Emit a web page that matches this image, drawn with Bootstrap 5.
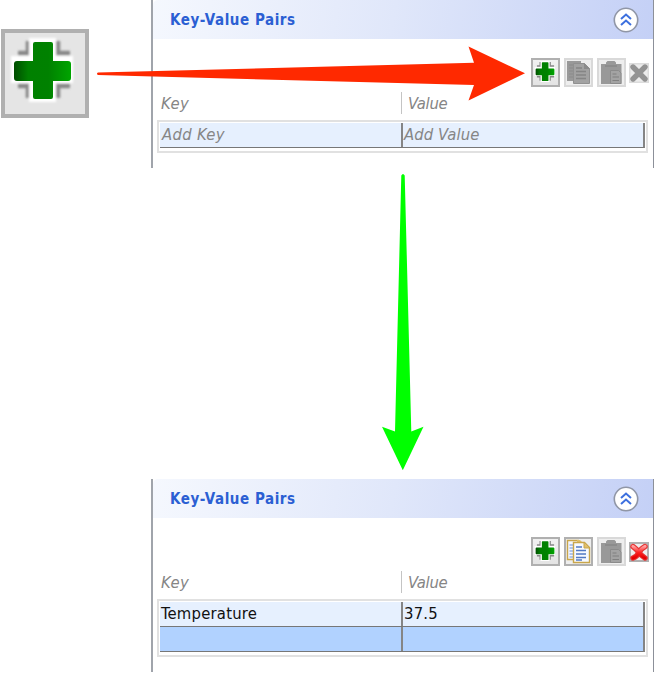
<!DOCTYPE html>
<html lang="en">
<head>
<meta charset="utf-8">
<meta name="viewport" content="width=device-width, initial-scale=1">
<title>Key-Value Pairs</title>
<link href="https://cdn.jsdelivr.net/npm/bootstrap@5.3.0/dist/css/bootstrap.min.css" rel="stylesheet">
<style>
body{font-family:"DejaVu Sans Condensed","DejaVu Sans",sans-serif;font-stretch:condensed;font-size:16.5px;line-height:20px;color:#111;background:#fff}
.stage{width:654px;height:674px}
.big-add{width:89px;height:89px;margin-top:29px}
.kv-panel{width:503px;border-left:2px solid #a0a4ab;border-right:1px solid #8c9099}
.kv-top{height:168px}
.kv-bottom{height:193px}
.gap-row{height:311px}
.kv-head{height:39px;padding:0 14px 0 17px;background:linear-gradient(100deg,#f5f8fe 0%,#e0e7fa 48%,#c4d0f6 100%);border-radius:5px 0 0 0}
.kv-title{font-size:15px;letter-spacing:.55px;font-weight:700;color:#2b5fd3}
.tools{height:29px;margin-top:19px;padding-right:4px;gap:4px}
.tools svg{display:block}
.tools .del{margin-left:-1px}
.labels{height:22px;margin:5px 5px 0 8px;line-height:23px;font-style:italic;color:#858585;letter-spacing:-.3px}
.labels .k{width:240px;letter-spacing:.3px}
.labels .v{border-left:1px solid #c4c4c4;padding-left:6px;height:22px}
.grid-box{margin:6px 5px 0 4px;border:2px solid #e1e1e1;padding:1px 1px 3px}
.cells{height:25px;background:#e6f0fe;border-bottom:1px solid #777;border-right:2px solid #858585;line-height:23px;letter-spacing:.22px}
.cells .k{width:241px;padding-left:1px}
.cells .v{border-left:2px solid #858585;padding-left:1px}
.hint{font-style:italic;color:#858585;letter-spacing:.1px}
.hint .k{padding-left:2px;letter-spacing:.3px}
.cells.picked{background:#b1d2ff}
</style>
<script src="https://cdn.jsdelivr.net/npm/bootstrap@5.3.0/dist/js/bootstrap.bundle.min.js"></script>
</head>
<body>
<svg width="0" height="0" class="position-absolute" aria-hidden="true">
  <defs>
    <linearGradient id="face" x2="0" y2="1"><stop stop-color="#f2f2f2"/><stop offset="1" stop-color="#e3e3e3"/></linearGradient>
    <linearGradient id="leaf"><stop stop-color="#004d00"/><stop offset=".25" stop-color="#008000"/><stop offset=".6" stop-color="#008100"/><stop offset="1" stop-color="#00a500"/></linearGradient>
    <linearGradient id="ruby" x2="0" y2="1"><stop stop-color="#ff9d9d"/><stop offset=".5" stop-color="#f22"/><stop offset="1" stop-color="#e30000"/></linearGradient>
    <filter id="soft"><feGaussianBlur stdDeviation="1.1"/></filter>
    <symbol id="plus" viewBox="0 0 88 88">
      <g filter="url(#soft)">
      <path d="M18 25h10v-12M18 58h10v12M58 13v12h12M58 70V58h12" transform="translate(0 -1)" fill="none" stroke="#888" stroke-width="4.500"/>
      <path d="M29 9h27v18h17v27H56v19H29V54H11V27h18z" fill="#fff"/>
      </g>
      <path d="M35 13h16q2 0 2 2v17h15q3 0 3 3v14q0 3-3 3H53v16q0 2-2 2H35q-2 0-2-2V52H17q-3 0-3-3V35q0-3 3-3h16V15q0-2 2-2z" fill="url(#leaf)"/>
    </symbol>
    <symbol id="add" viewBox="0 0 29 29">
      <path d="M1 1h27v27H1z" fill="url(#face)" stroke="#b0b0b0" stroke-width="2"/>
      <use href="#plus" width="29" height="29"/>
    </symbol>
    <symbol id="paste" viewBox="0 0 29 29">
      <path d="M1 1h27v27H1z" fill="#eee" stroke="#d9d9d9" stroke-width="2"/>
      <path d="M4 6h5V4.500L10.500 3h7L19 4.500V6h5.500v20H4z" fill="#999"/>
      <path d="M8 8h12" stroke="#898989" stroke-width="1.500"/>
      <path d="M13.500 12.500h8l2.500 2.500v10.500H13.500z" fill="#a3a3a3" stroke="#8b8b8b"/>
      <path d="M15.500 16h4M15.500 19h6.500M15.500 22.500h6.500" stroke="#808080" stroke-width="1.200"/>
    </symbol>
    <symbol id="chevrons" viewBox="0 0 26 26">
      <circle cx="13" cy="13" r="11.700" fill="#fff" stroke="#9096a6" stroke-width="1.600"/>
      <path d="M8 12L13 7.500l5 4.500M8 18L13 13.500l5 4.500" fill="none" stroke="#3d70df" stroke-width="2"/>
    </symbol>
  </defs>
</svg>
<main class="stage position-relative overflow-hidden">
  <div class="d-flex justify-content-between">
    <svg class="big-add" viewBox="0 0 89 89" role="img" aria-label="Add">
      <path d="M3 2h84v85H3z" fill="#e5e5e5" stroke="#b0b0b0" stroke-width="4"/>
      <use href="#plus" width="88" height="88"/>
    </svg>
    <section class="kv-panel kv-top">
      <header class="kv-head d-flex align-items-center justify-content-between">
        <span class="kv-title">Key-Value Pairs</span>
        <svg width="26" height="26"><use href="#chevrons"/></svg>
      </header>
      <div class="tools d-flex justify-content-end align-items-center">
        <svg width="29" height="29"><use href="#add"/></svg>
        <svg width="29" height="29" viewBox="0 0 29 29">
          <path d="M1 1h27v27H1z" fill="#eee" stroke="#d9d9d9" stroke-width="2"/>
          <path d="M3 3h14v20H3z" fill="#999"/>
          <path d="M5 7h4M5 10h4M5 13h4M5 16h4M5 19h4" stroke="#8b8b8b"/>
          <path d="M9.500 5.500h11l5 5v15h-16z" fill="#a2a2a2" stroke="#909090"/>
          <path d="M20 5v6h6z" fill="#8b8b8b"/>
          <path d="M12 10h6M12 13.500h10M12 17h10M12 20.500h10" stroke="#858585" stroke-width="1.300"/>
        </svg>
        <svg width="29" height="29"><use href="#paste"/></svg>
        <svg class="del" width="20" height="20" viewBox="0 0 20 20">
          <path d="M.75.75h18.500v18.500H.75z" fill="#ececec" stroke="#dcdcdc" stroke-width="1.500"/>
          <path d="M4 4l12 12M16 4L4 16" stroke="#939393" stroke-width="5.400" stroke-linecap="round"/>
        </svg>
      </div>
      <div class="labels d-flex"><div class="k">Key</div><div class="v">Value</div></div>
      <div class="grid-box">
        <div class="cells d-flex hint"><div class="k">Add Key</div><div class="v">Add Value</div></div>
      </div>
    </section>
  </div>
  <div class="gap-row"></div>
  <section class="kv-panel kv-bottom ms-auto">
    <header class="kv-head d-flex align-items-center justify-content-between">
      <span class="kv-title">Key-Value Pairs</span>
      <svg width="26" height="26"><use href="#chevrons"/></svg>
    </header>
    <div class="tools d-flex justify-content-end align-items-center">
      <svg width="29" height="29"><use href="#add"/></svg>
      <svg width="29" height="29" viewBox="0 0 29 29">
        <path d="M1 1h27v27H1z" fill="#eee" stroke="#b0b0b0" stroke-width="2"/>
        <path d="M3.500 3.500h11l3 3v16h-14z" fill="#f4f7ff" stroke="#c9a64b" stroke-width="1.400"/>
        <path d="M13 3h3l3 3h-6z" fill="#dfbf6c"/>
        <path d="M5.500 8h4M5.500 11h4M5.500 14h4M5.500 17h4M5.500 20h4" stroke="#6b91d8"/>
        <path d="M9.500 5.500h11l5 5v15h-16z" fill="#f7faff" stroke="#c9a64b" stroke-width="1.400"/>
        <path d="M20 5v6h6z" fill="#dfbf6c" stroke="#c9a64b"/>
        <path d="M12 10h6M12 13.500h10M12 17h10M12 20.500h10M12 23h6" stroke="#5279c4" stroke-width="1.300"/>
      </svg>
      <svg width="29" height="29"><use href="#paste"/></svg>
      <svg class="del" width="20" height="20" viewBox="0 0 20 20">
        <path d="M1 1h18v18H1z" fill="#eee" stroke="#b0b0b0" stroke-width="2"/>
        <path d="M4 4.500q4 3 6 6t6 5.500M16 4.500q-4 2-6 6T4 16" fill="none" stroke="#e63232" stroke-width="5.400" stroke-linecap="round"/>
        <path d="M4 4.500q4 3 6 6t6 5.500M16 4.500q-4 2-6 6T4 16" fill="none" stroke="url(#ruby)" stroke-width="3.200" stroke-linecap="round"/>
      </svg>
    </div>
    <div class="labels d-flex"><div class="k">Key</div><div class="v">Value</div></div>
    <div class="grid-box">
      <div class="cells d-flex"><div class="k">Temperature</div><div class="v">37.5</div></div>
      <div class="cells d-flex picked"><div class="k"></div><div class="v"></div></div>
    </div>
  </section>
  <svg class="position-absolute top-0 start-0 pe-none" width="654" height="674" aria-hidden="true">
    <path d="M98 72.500L474 62.700 468.500 46.500 525 73.300 468.500 100.500 474 85 98 75Q96 73.700 98 72.500z" fill="#ff2900"/>
    <path d="M401.300 175.500Q403 172.500 404.700 175.500L411.300 431.500 423.500 426.700 402.800 470.300 382 426.700 395 431.500z" fill="#0f0"/>
  </svg>
</main>
</body>
</html>
